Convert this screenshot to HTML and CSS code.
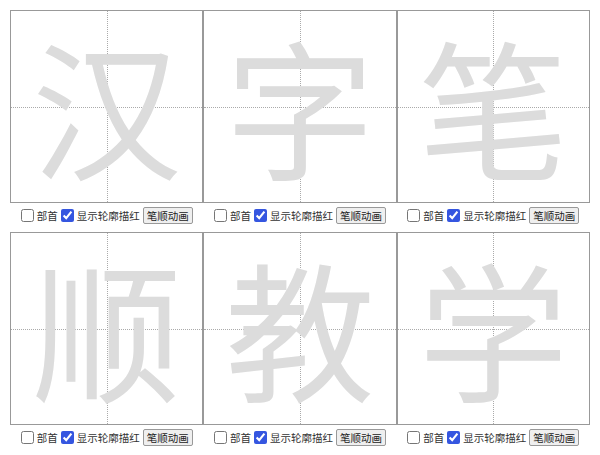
FILE: index.html
```html
<!DOCTYPE html>
<html lang="zh">
<head>
<meta charset="utf-8">
<link rel="stylesheet" href="styles.css">
</head>
<body>
<div class="grid">
  <div class="cell">
    <div class="box"><span class="char">汉</span></div>
    <div class="controls">
      <label class="opt"><input type="checkbox">部首</label>
      <label class="opt"><input type="checkbox" checked>显示轮廓描红</label>
      <button class="btn">笔顺动画</button>
    </div>
  </div>
  <div class="cell">
    <div class="box"><span class="char">字</span></div>
    <div class="controls">
      <label class="opt"><input type="checkbox">部首</label>
      <label class="opt"><input type="checkbox" checked>显示轮廓描红</label>
      <button class="btn">笔顺动画</button>
    </div>
  </div>
  <div class="cell">
    <div class="box"><span class="char">笔</span></div>
    <div class="controls">
      <label class="opt"><input type="checkbox">部首</label>
      <label class="opt"><input type="checkbox" checked>显示轮廓描红</label>
      <button class="btn">笔顺动画</button>
    </div>
  </div>
  <div class="cell">
    <div class="box"><span class="char">顺</span></div>
    <div class="controls">
      <label class="opt"><input type="checkbox">部首</label>
      <label class="opt"><input type="checkbox" checked>显示轮廓描红</label>
      <button class="btn">笔顺动画</button>
    </div>
  </div>
  <div class="cell">
    <div class="box"><span class="char">教</span></div>
    <div class="controls">
      <label class="opt"><input type="checkbox">部首</label>
      <label class="opt"><input type="checkbox" checked>显示轮廓描红</label>
      <button class="btn">笔顺动画</button>
    </div>
  </div>
  <div class="cell">
    <div class="box"><span class="char">学</span></div>
    <div class="controls">
      <label class="opt"><input type="checkbox">部首</label>
      <label class="opt"><input type="checkbox" checked>显示轮廓描红</label>
      <button class="btn">笔顺动画</button>
    </div>
  </div>
</div>
</body>
</html>
```
FILE: styles.css
```css
html, body {
  margin: 0;
  padding: 0;
  background: #fff;
}
body {
  font-family: "Noto Sans CJK SC", "Noto Sans", sans-serif;
  color: #333;
}
.grid {
  padding: 10px;
  display: grid;
  grid-template-columns: repeat(3, 1fr);
}
.cell {
  display: flex;
  flex-direction: column;
}
.box {
  position: relative;
  height: 193px;
  border: 1px solid #999;
  box-sizing: border-box;
  display: flex;
  align-items: center;
  justify-content: center;
}
.box::before,
.box::after {
  content: "";
  position: absolute;
}
.box::before {
  left: 50%;
  top: 0;
  bottom: 0;
  border-left: 1px dotted #aaa;
}
.box::after {
  top: 50%;
  left: 0;
  right: 0;
  border-top: 1px dotted #aaa;
}
.char {
  position: relative;
  z-index: 1;
  font-size: 150px;
  line-height: 1;
  color: #dcdcdc;
  font-family: "Noto Sans CJK SC", sans-serif;
  margin-top: -6px;
}
.controls {
  height: 29px;
  display: flex;
  align-items: center;
  justify-content: center;
  gap: 3px;
  font-size: 10.5px;
  line-height: 14px;
  padding-bottom: 4px;
  box-sizing: border-box;
}
.opt {
  display: flex;
  align-items: center;
  white-space: nowrap;
}
.opt input {
  width: 13px;
  height: 13px;
  margin: 0 3px 0 0;
  accent-color: #3556e0;
}
.btn {
  font-family: inherit;
  font-size: 10.5px;
  color: #222;
  background: #efefef;
  border: 1px solid #999;
  border-radius: 2px;
  padding: 0 3px;
  height: 17px;
  line-height: 15px;
}
```
